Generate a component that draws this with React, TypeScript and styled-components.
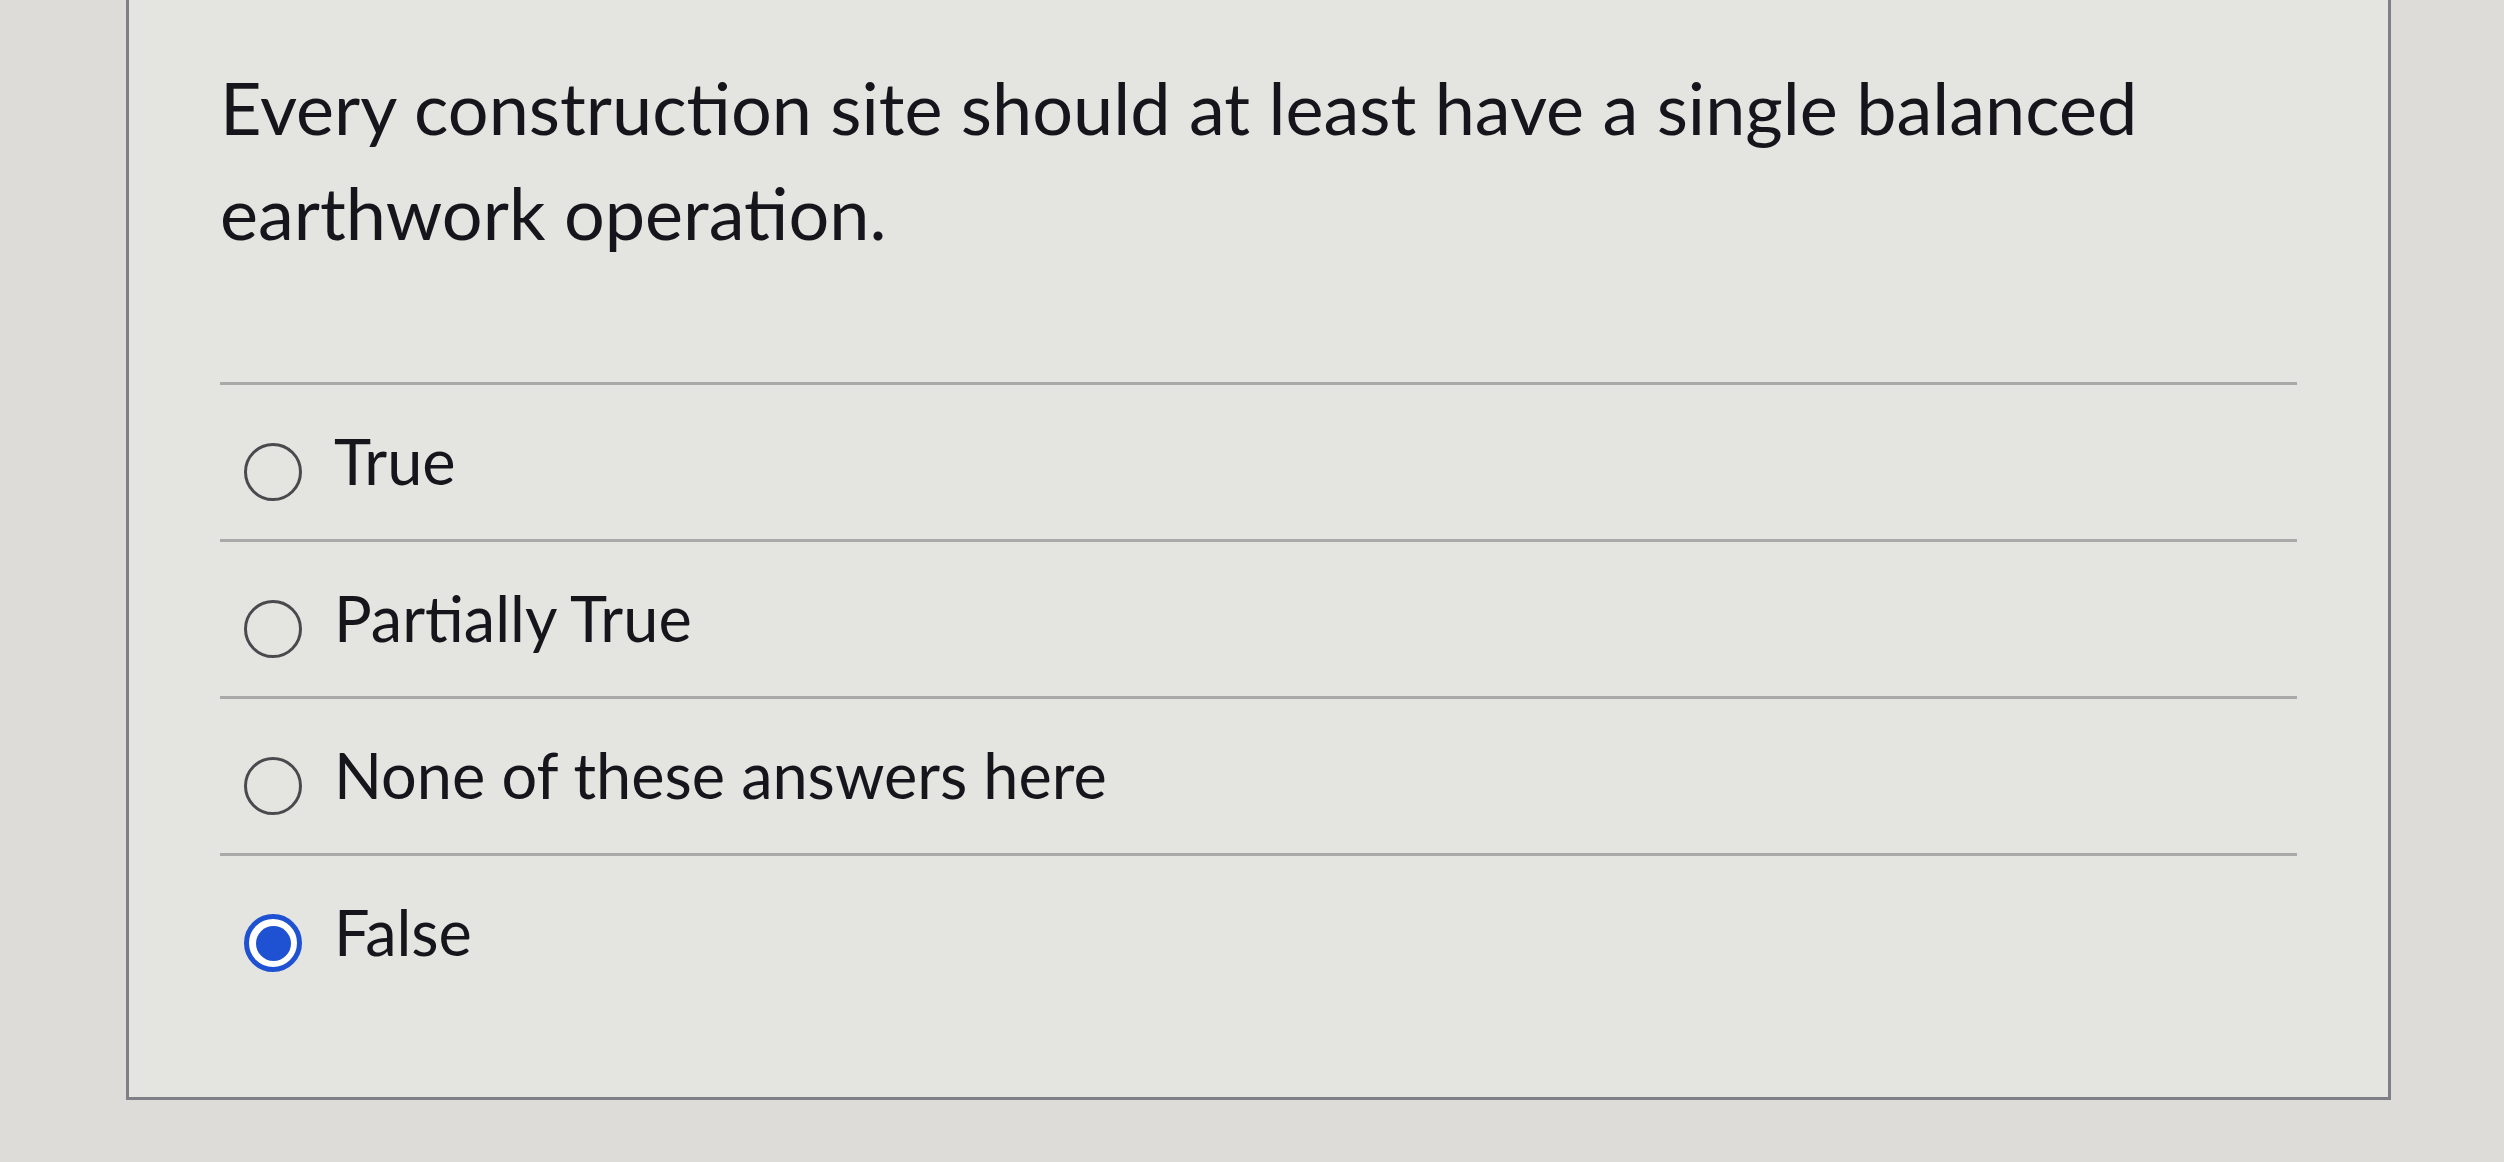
import React from "react";
import styled, { createGlobalStyle } from "styled-components";

const Global = createGlobalStyle`
  html, body {
    margin: 0;
    padding: 0;
    background: #dddcd8;
  }
  body {
    font-family: Lato, "Open Sans", sans-serif;
    color: #16151b;
  }
`;

const Page = styled.div`
  width: 2504px;
  height: 1162px;
  padding-left: 126px;
  box-sizing: border-box;
  overflow: hidden;
`;

const Card = styled.div`
  width: 2265px;
  box-sizing: border-box;
  background: #e4e4e0;
  border: 3px solid #7f7f86;
  border-top: none;
  padding: 55px 91px 125px 91px;
`;

const Question = styled.p`
  margin: 0 0 117px 0;
  font-size: 72px;
  line-height: 105px;
  font-weight: 400;
`;

const Options = styled.div`
  display: flex;
  flex-direction: column;
`;

const Option = styled.label<{ last?: boolean }>`
  display: flex;
  align-items: flex-start;
  gap: 32px;
  padding: 58px 0 ${(p) => (p.last ? "0" : "38px")} 24px;
  border-top: 3px solid #a9a9a9;
  cursor: pointer;
`;

const Radio = styled.span<{ checked?: boolean }>`
  width: 58px;
  height: 58px;
  flex: none;
  box-sizing: border-box;
  border-radius: 50%;
  border: ${(p) => (p.checked ? "5px solid #1e52d2" : "3.5px solid #4a4a4e")};
  background: ${(p) => (p.checked ? "#ffffff" : "transparent")};
  display: flex;
  align-items: center;
  justify-content: center;
`;

const Dot = styled.span`
  width: 35px;
  height: 35px;
  border-radius: 50%;
  background: #1e52d2;
`;

const OptionText = styled.span`
  font-size: 63px;
  line-height: 58px;
  margin-top: -11px;
`;

const options = [
  { label: "True", checked: false },
  { label: "Partially True", checked: false },
  { label: "None of these answers here", checked: false },
  { label: "False", checked: true },
];

export default function App() {
  return (
    <Page>
      <Global />
      <Card>
        <Question>
          Every construction site should at least have a single balanced
          earthwork operation.
        </Question>
        <Options>
          {options.map((o, i) => (
            <Option key={o.label} last={i === options.length - 1}>
              <Radio checked={o.checked}>{o.checked && <Dot />}</Radio>
              <OptionText>{o.label}</OptionText>
            </Option>
          ))}
        </Options>
      </Card>
    </Page>
  );
}
